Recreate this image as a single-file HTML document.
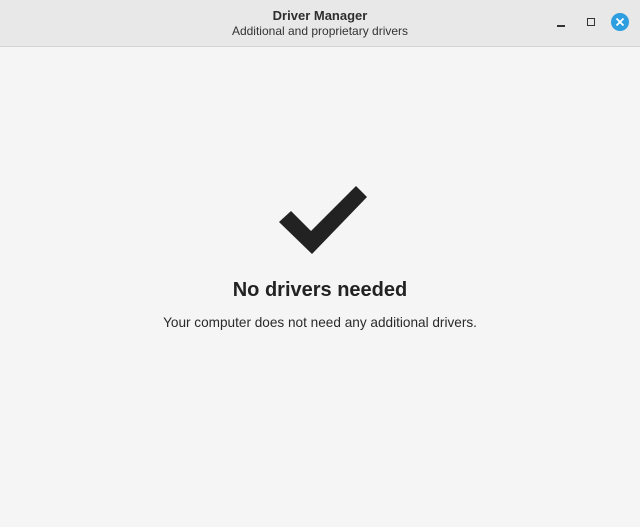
<!DOCTYPE html>
<html><head><meta charset="utf-8"><style>
body{margin:0;width:640px;height:527px;background:#f5f5f5;font-family:"Liberation Sans","DejaVu Sans",sans-serif;overflow:hidden;position:relative}
.tb{position:absolute;left:0;top:0;width:640px;height:46px;background:#e8e8e8;border-bottom:1px solid #d4d4d4}
.t1{position:absolute;top:8px;width:640px;text-align:center;font-size:13px;font-weight:bold;color:#2e2e2e}
.t2{position:absolute;top:24px;width:640px;text-align:center;font-size:12px;color:#333}
h1{position:absolute;top:279px;width:640px;margin:0;text-align:center;font-size:20px;font-weight:bold;color:#222}
p{position:absolute;top:315px;width:640px;margin:0;text-align:center;font-size:13.6px;color:#2a2a2a}
</style></head><body>
<div class="tb">
<div class="t1">Driver Manager</div>
<div class="t2">Additional and proprietary drivers</div>
<div style="position:absolute;left:557px;top:25px;width:8px;height:1.5px;background:#333"></div>
<div style="position:absolute;left:587px;top:18px;width:6px;height:6px;border:1.3px solid #333"></div>
<svg style="position:absolute;left:611px;top:13px" width="18" height="18"><circle cx="9" cy="9" r="9" fill="#2d9ee0"/><path d="M5.5 5.5L12.5 12.5M12.5 5.5L5.5 12.5" stroke="#fff" stroke-width="1.8"/></svg>
</div>
<svg style="position:absolute;left:0;top:0" width="640" height="527"><polygon points="279,222 291,211 311,231 356,186 367,197 312,254" fill="#222"/></svg>
<h1>No drivers needed</h1>
<p>Your computer does not need any additional drivers.</p>
</body></html>
